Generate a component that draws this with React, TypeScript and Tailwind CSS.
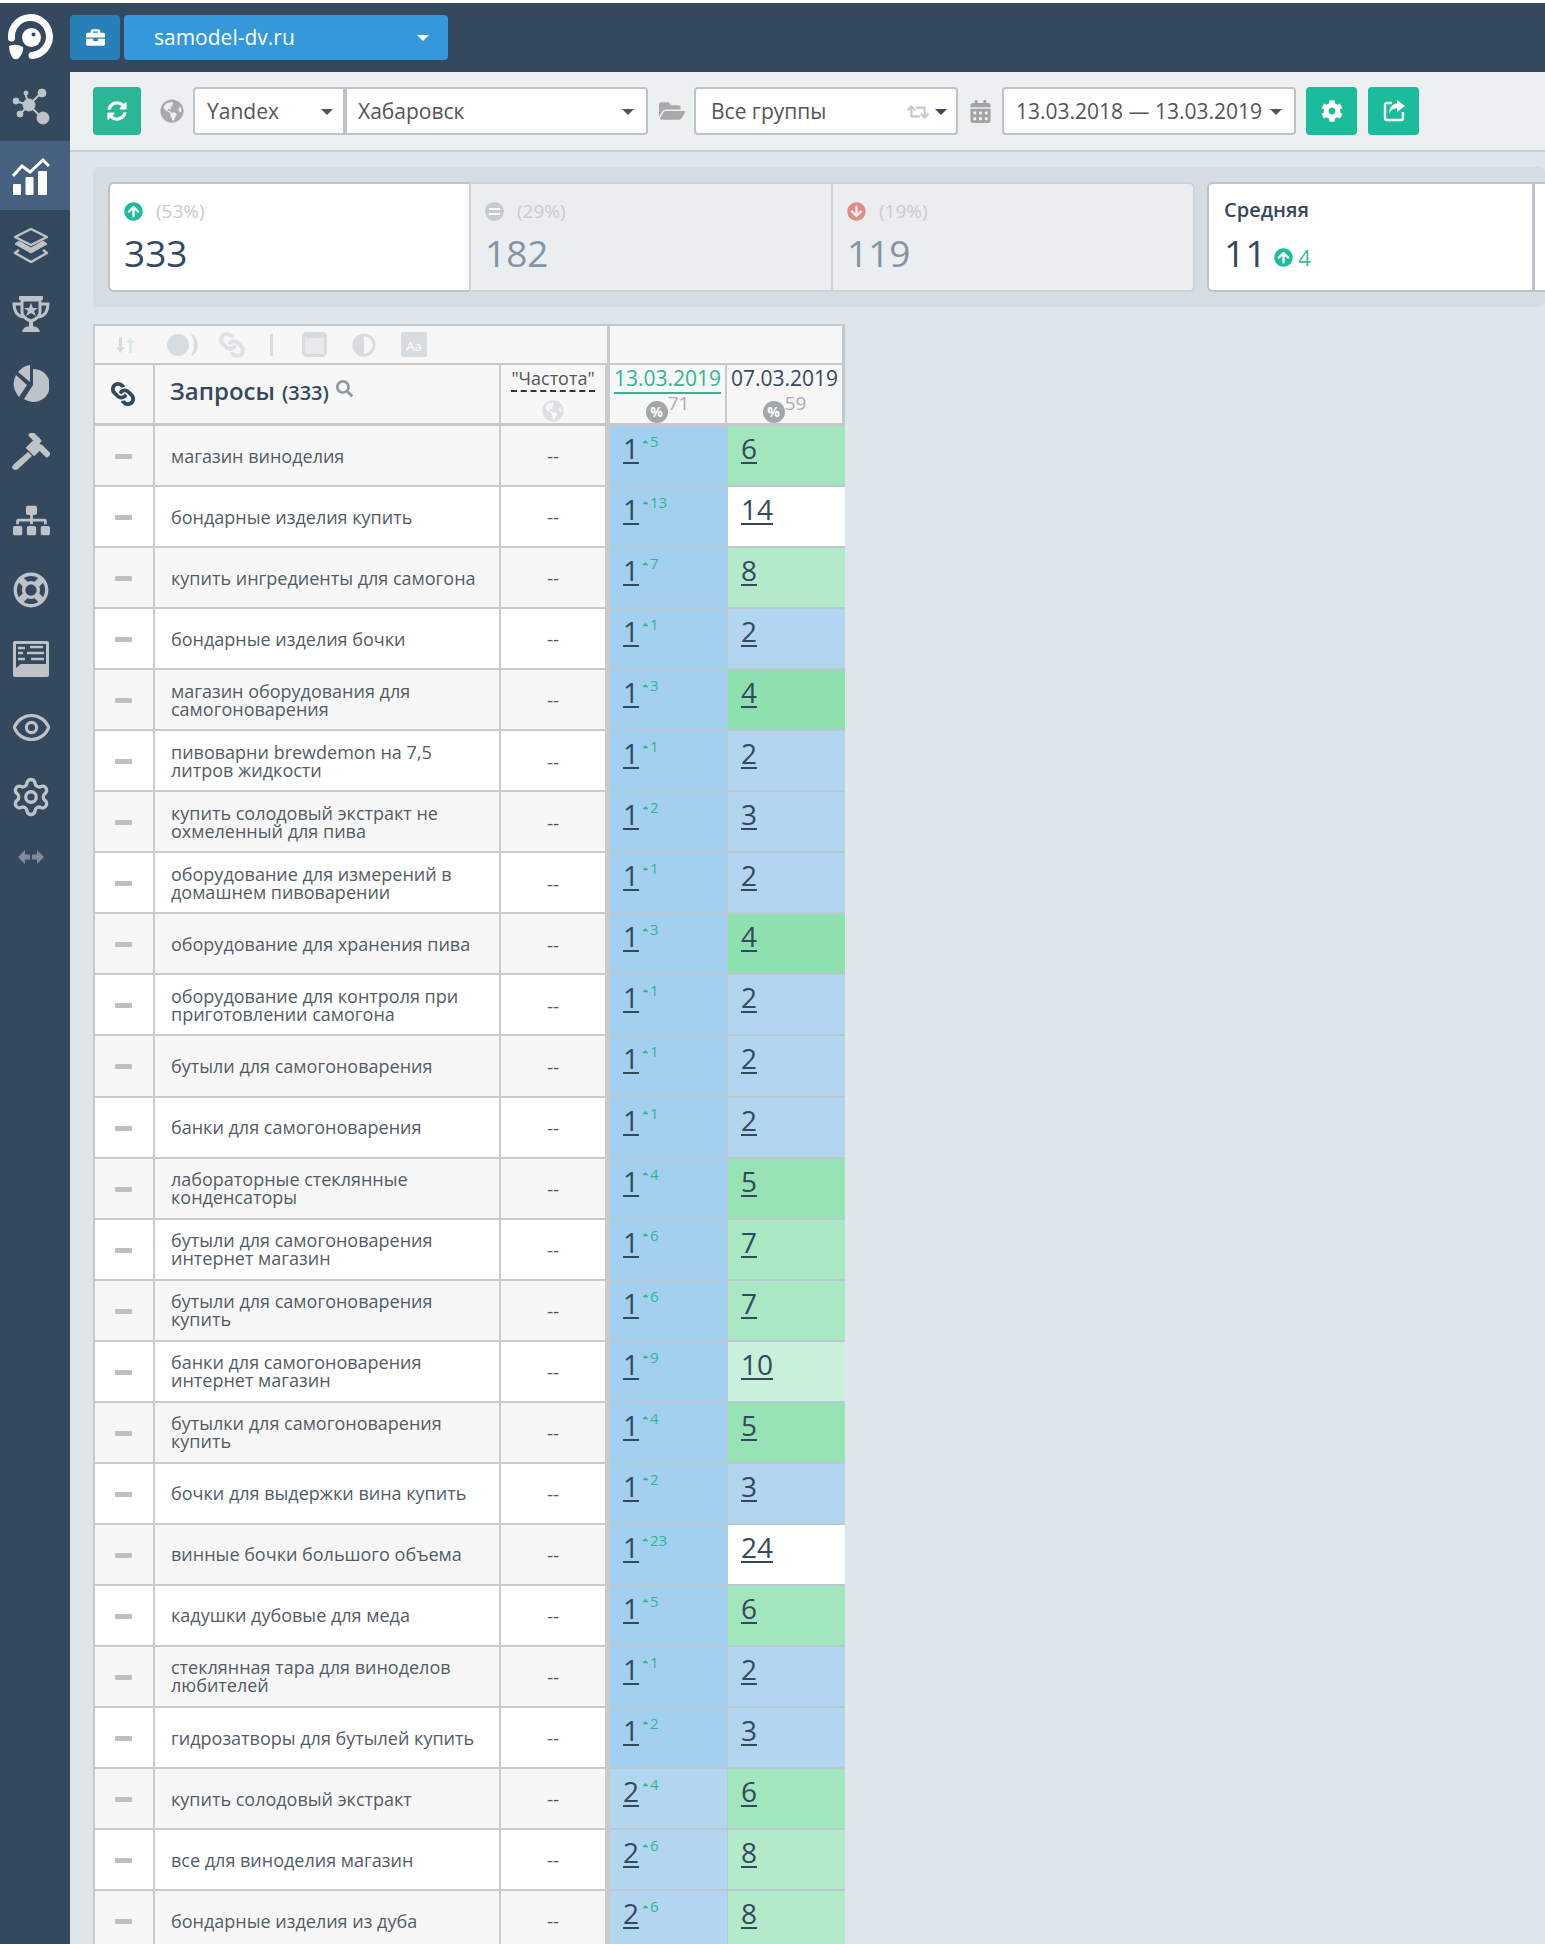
import React from 'react';
import {
  FaBriefcase,
  FaSyncAlt,
  FaGlobeAmericas,
  FaFolderOpen,
  FaRetweet,
  FaCalendarAlt,
  FaCog,
  FaArrowCircleUp,
  FaArrowCircleDown,
  FaLink,
  FaSearch,
  FaSitemap,
  FaRegLifeRing,
  FaCaretUp,
  FaAdjust,
} from 'react-icons/fa';
import { Eye, Settings } from 'lucide-react';

interface QueryRow {
  text: string;
  pos: number;
  delta: number;
  prev: number;
}

const rows: QueryRow[] = [
  { text: 'магазин виноделия', pos: 1, delta: 5, prev: 6 },
  { text: 'бондарные изделия купить', pos: 1, delta: 13, prev: 14 },
  { text: 'купить ингредиенты для самогона', pos: 1, delta: 7, prev: 8 },
  { text: 'бондарные изделия бочки', pos: 1, delta: 1, prev: 2 },
  { text: 'магазин оборудования для\nсамогоноварения', pos: 1, delta: 3, prev: 4 },
  { text: 'пивоварни brewdemon на 7,5\nлитров жидкости', pos: 1, delta: 1, prev: 2 },
  { text: 'купить солодовый экстракт не\nохмеленный для пива', pos: 1, delta: 2, prev: 3 },
  { text: 'оборудование для измерений в\nдомашнем пивоварении', pos: 1, delta: 1, prev: 2 },
  { text: 'оборудование для хранения пива', pos: 1, delta: 3, prev: 4 },
  { text: 'оборудование для контроля при\nприготовлении самогона', pos: 1, delta: 1, prev: 2 },
  { text: 'бутыли для самогоноварения', pos: 1, delta: 1, prev: 2 },
  { text: 'банки для самогоноварения', pos: 1, delta: 1, prev: 2 },
  { text: 'лабораторные стеклянные\nконденсаторы', pos: 1, delta: 4, prev: 5 },
  { text: 'бутыли для самогоноварения\nинтернет магазин', pos: 1, delta: 6, prev: 7 },
  { text: 'бутыли для самогоноварения\nкупить', pos: 1, delta: 6, prev: 7 },
  { text: 'банки для самогоноварения\nинтернет магазин', pos: 1, delta: 9, prev: 10 },
  { text: 'бутылки для самогоноварения\nкупить', pos: 1, delta: 4, prev: 5 },
  { text: 'бочки для выдержки вина купить', pos: 1, delta: 2, prev: 3 },
  { text: 'винные бочки большого объема', pos: 1, delta: 23, prev: 24 },
  { text: 'кадушки дубовые для меда', pos: 1, delta: 5, prev: 6 },
  { text: 'стеклянная тара для виноделов\nлюбителей', pos: 1, delta: 1, prev: 2 },
  { text: 'гидрозатворы для бутылей купить', pos: 1, delta: 2, prev: 3 },
  { text: 'купить солодовый экстракт', pos: 2, delta: 4, prev: 6 },
  { text: 'все для виноделия магазин', pos: 2, delta: 6, prev: 8 },
  { text: 'бондарные изделия из дуба', pos: 2, delta: 6, prev: 8 },
];

const cellColor = (v: number) => {
  if (v === 1) return 'bg-[#a3d0ee]';
  if (v <= 3) return 'bg-[#b3d6f0]';
  if (v === 4) return 'bg-[#8ee0ae]';
  if (v === 5) return 'bg-[#98e3b6]';
  if (v === 6) return 'bg-[#a1e6bc]';
  if (v === 7) return 'bg-[#aae8c3]';
  if (v === 8) return 'bg-[#b3ebca]';
  if (v <= 10) return 'bg-[#c8f0da]';
  return 'bg-white';
};

const Logo = () => (
  <svg width="48" height="48" viewBox="0 0 48 48" fill="none">
    <path d="M4.5 24 A19 19 0 1 1 25 41.5" stroke="#fff" strokeWidth="7" strokeLinecap="round" />
    <circle cx="24.5" cy="23.5" r="9.5" fill="#fff" />
    <circle cx="26.5" cy="20.5" r="2" fill="#34495e" />
    <path d="M2 32 Q9 29 16 33 Q17 38 12 44 Q8 47 5 43 Q2 38 2 32 Z" fill="#fff" />
  </svg>
);

const GrowthIcon = () => (
  <svg width="38" height="38" viewBox="0 0 38 38" fill="#fff">
    <rect x="1" y="27" width="8" height="11" rx="1" />
    <rect x="13.5" y="20" width="8" height="18" rx="1" />
    <rect x="26" y="14" width="9" height="24" rx="1" />
    <path d="M1 19 L10 9 L18 15 L31 3 L37 9" fill="none" stroke="#fff" strokeWidth="3" />
  </svg>
);

const LayersIcon = () => (
  <svg width="36" height="36" viewBox="0 0 36 36" fill="none" stroke="#bdc3c7" strokeWidth="2.4" strokeLinejoin="round">
    <path d="M18 2 L34 10 L18 18 L2 10 Z" />
    <path d="M6 14 L2 17 L18 26 L34 17 L30 14 L18 21 Z" fill="#bdc3c7" strokeWidth="1" />
    <path d="M6 23 L2 26 L18 35 L34 26 L30 23" />
  </svg>
);

const TrophyIcon = () => (
  <svg width="38" height="38" viewBox="0 0 38 38" fill="#bdc3c7">
    <rect x="7" y="1" width="24" height="4" rx="1" />
    <path d="M10 5 H28 V17 Q28 23 19 26 Q10 23 10 17 Z" fill="none" stroke="#bdc3c7" strokeWidth="3" />
    <path d="M9 9 H2 Q2 20 11 22 M29 9 H36 Q36 20 27 22" fill="none" stroke="#bdc3c7" strokeWidth="3" />
    <path d="M19 8 L21 13 H26 L22 16 L24 21 L19 18 L14 21 L16 16 L12 13 H17 Z" />
    <rect x="17" y="25" width="4" height="7" />
    <path d="M10 37 Q11 31 19 31 Q27 31 28 37 Z" />
  </svg>
);

const PieIcon = () => (
  <svg width="36" height="38" viewBox="0 0 36 38" fill="#bdc3c7">
    <path d="M20 5 A16.5 16.5 0 1 1 11 35 L20 21 Z" />
    <path d="M17 1 V18 L5 8 Q10 2 17 1 Z" />
    <path d="M3 11 L14 21 L6 33 Q-3 22 3 11 Z" />
  </svg>
);

const GavelIcon = () => (
  <svg width="38" height="38" viewBox="0 0 38 38" fill="#bdc3c7">
    <rect x="16" y="2" width="14" height="6" rx="1.5" transform="rotate(45 23 5)" />
    <rect x="25" y="15" width="14" height="6" rx="1.5" transform="rotate(45 32 18)" />
    <rect x="16.5" y="8" width="12" height="13" transform="rotate(45 22.5 14.5)" />
    <path d="M16 19 L20 23 L6 36 Q3 38 1 36 Q-1 34 2 31 Z" />
  </svg>
);

const ReportIcon = () => (
  <svg width="36" height="36" viewBox="0 0 36 36">
    <rect x="0" y="0" width="36" height="36" rx="2" fill="#bdc3c7" />
    <rect x="3" y="3" width="30" height="20" fill="#34495e" />
    <path d="M5 7 H12 M17 6 H30 M5 12 H10 M14 12 H31 M5 18 H12 M18 18 H31" stroke="#bdc3c7" strokeWidth="2.4" />
    <path d="M3 27 L9 22 H3 Z" fill="#34495e" />
  </svg>
);

const NetworkIcon = () => (
  <svg width="38" height="38" viewBox="0 0 38 38" fill="#bdc3c7" stroke="#bdc3c7">
    <path d="M17 17 L30 4 M17 17 L30 30 M17 17 L3 13 M17 17 L7 27 M17 17 L13 5" strokeWidth="2" />
    <circle cx="17" cy="17" r="6" />
    <circle cx="30" cy="5" r="4" />
    <circle cx="31" cy="30" r="6" />
    <circle cx="4" cy="13" r="3" />
    <circle cx="8" cy="26" r="3" />
    <circle cx="14" cy="5" r="2" />
  </svg>
);

const SideItem = ({ active, children, className }: { active?: boolean; children: React.ReactNode; className?: string }) => (
  <div className={`flex h-[69px] items-center justify-center pr-[8px] ${active ? 'bg-[#46607f]' : ''} ${className ?? ''}`}>
    {children}
  </div>
);

const Sidebar = () => (
  <aside className="flex w-[70px] shrink-0 flex-col bg-[#34495e] text-[#bdc3c7]">
    <SideItem className="pt-[1px]">
      <Logo />
    </SideItem>
    <SideItem>
      <NetworkIcon />
    </SideItem>
    <SideItem active>
      <GrowthIcon />
    </SideItem>
    <SideItem>
      <LayersIcon />
    </SideItem>
    <SideItem>
      <TrophyIcon />
    </SideItem>
    <SideItem>
      <PieIcon />
    </SideItem>
    <SideItem>
      <GavelIcon />
    </SideItem>
    <SideItem>
      <FaSitemap size={37} />
    </SideItem>
    <SideItem>
      <FaRegLifeRing size={36} />
    </SideItem>
    <SideItem>
      <ReportIcon />
    </SideItem>
    <SideItem>
      <Eye size={41} strokeWidth={1.8} />
    </SideItem>
    <SideItem>
      <Settings size={42} strokeWidth={1.9} />
    </SideItem>
    <div className="flex h-[52px] items-center justify-center pr-[8px]">
      <svg width="26" height="14" viewBox="0 0 26 14" fill="#7f8c9a">
        <path d="M0 7 L7 0 V4.5 H12 V9.5 H7 V14 Z" />
        <path d="M26 7 L19 0 V4.5 H14 V9.5 H19 V14 Z" />
      </svg>
    </div>
  </aside>
);

const Select = ({ children, className }: { children: React.ReactNode; className?: string }) => (
  <div className={`flex h-[48px] items-center rounded-[4px] border-2 border-[#bdc3c7] bg-white pt-[2px] text-[21px] text-[#555] ${className ?? ''}`}>
    {children}
  </div>
);

const Caret = ({ className }: { className?: string }) => (
  <span className={`h-0 w-0 border-x-[6px] border-t-[6px] border-x-transparent border-t-[#555] ${className ?? ''}`} />
);

const GreenButton = ({ children, className }: { children: React.ReactNode; className?: string }) => (
  <div className={`flex h-[48px] items-center justify-center rounded-[4px] bg-[#1abc9c] text-white ${className ?? ''}`}>
    {children}
  </div>
);

const Toolbar = () => (
  <div className="flex h-[80px] shrink-0 items-center border-b-2 border-[#c8ced2] bg-[#ecf0f1] pl-[23px]">
    <GreenButton className="w-[48px] bg-[#2ab795]">
      <FaSyncAlt size={20} />
    </GreenButton>
    <FaGlobeAmericas size={24} className="ml-[19px] text-[#a7a9ab]" />
    <Select className="ml-[9px] w-[152px] justify-between rounded-r-none pl-[12px] pr-[10px]">
      Yandex
      <Caret />
    </Select>
    <Select className="w-[303px] justify-between rounded-l-none pl-[11px] pr-[12px]">
      Хабаровск
      <Caret />
    </Select>
    <FaFolderOpen size={26} className="ml-[11px] text-[#a9a9a9]" />
    <Select className="ml-[9px] w-[264px] pl-[15px] pr-[9px] text-[#444f5a]">
      Все группы
      <FaRetweet size={22} className="ml-auto text-[#c3c9cd]" />
      <span className="ml-[6px] h-0 w-0 border-x-[6px] border-t-[6px] border-x-transparent border-t-[#34495e]" />
    </Select>
    <FaCalendarAlt size={23} className="ml-[11px] text-[#a3a3a3]" />
    <Select className="ml-[10px] w-[294px] justify-between pl-[12px] pr-[12px]">
      13.03.2018 — 13.03.2019
      <Caret />
    </Select>
    <GreenButton className="ml-[10px] w-[51px]">
      <FaCog size={22} />
    </GreenButton>
    <GreenButton className="ml-[11px] w-[51px]">
      <svg width="24" height="24" viewBox="0 0 24 24">
        <path d="M10 4 H5 a2 2 0 0 0 -2 2 v13 a2 2 0 0 0 2 2 h14 a2 2 0 0 0 2 -2 v-6" stroke="#fff" strokeWidth="2.4" fill="none" />
        <path d="M15 1 L23 7 L15 13 V9.5 C11 9.5 8.5 11 7 15 C7 9 10 5 15 4.5 Z" fill="#fff" />
      </svg>
    </GreenButton>
  </div>
);

const StatCard = ({ icon, label, value, active, className }: { icon: React.ReactNode; label: string; value: string; active?: boolean; className?: string }) => (
  <div className={`h-[110px] shrink-0 border-2 pl-[14px] pt-[15px] ${active ? 'border-[#bdc3c7] bg-white text-[#34495e]' : 'border-[#cdd3d6] bg-[#ebeef1] text-[#8494a3]'} ${className ?? ''}`}>
    <div className="flex h-[24px] items-center gap-[13px] text-[19px] leading-[24px] text-[#c8ccce]">
      {icon}
      <span>{label}</span>
    </div>
    <div className="mt-[7px] text-[37px] font-medium leading-[46px]">{value}</div>
  </div>
);

const EqualsCircle = () => (
  <span className="flex h-[19px] w-[19px] items-center justify-center rounded-full bg-[#c5cbd0]">
    <span className="h-[7px] w-[11px] border-y-2 border-white" />
  </span>
);

const Summary = () => (
  <div className="flex h-[140px] w-[1452px] shrink-0 items-center rounded-[6px] bg-[#d5dde3] pl-[15px]">
    <StatCard active className="w-[363px] rounded-l-[6px]" icon={<FaArrowCircleUp size={19} className="text-[#1abc9c]" />} label="(53%)" value="333" />
    <StatCard className="-ml-[2px] w-[364px]" icon={<EqualsCircle />} label="(29%)" value="182" />
    <StatCard className="-ml-[2px] w-[364px] rounded-r-[6px]" icon={<FaArrowCircleDown size={19} className="text-[#e08e85]" />} label="(19%)" value="119" />
    <div className="ml-[12px] h-[110px] w-[328px] shrink-0 rounded-l-[6px] border-2 border-r-[3px] border-[#bdc3c7] bg-white pl-[15px] pt-[13px] text-[#34495e]">
      <div className="text-[20px] font-semibold leading-[26px]">Средняя</div>
      <div className="mt-[7px] flex items-center text-[37px] leading-[46px]">
        11
        <FaArrowCircleUp size={19} className="ml-[8px] mt-[8px] text-[#1abc9c]" />
        <span className="ml-[5px] mt-[7px] text-[22px] leading-[24px] text-[#3fb89c]">4</span>
      </div>
    </div>
    <div className="h-[110px] w-[20px] shrink-0 border-y-2 border-[#bdc3c7] bg-white" />
  </div>
);

const TableTools = () => (
  <div className="flex h-[39px] items-center border-b-2 border-[#c5c9cc] pl-[21px]">
    <svg width="20" height="20" viewBox="0 0 20 20">
      <path d="M3 2h3v10h3l-4.5 6L0 12h3z" fill="#d8dcdf" />
      <path d="M13 18h3V8h3l-4.5-6L10 8h3z" fill="#e2e8ec" />
    </svg>
    <svg width="32" height="24" viewBox="0 0 32 24" className="ml-[31px]">
      <circle cx="11" cy="12" r="11" fill="#d8dcdf" />
      <path d="M24 1 C33 5 33 19 24 23 C28 16 28 8 24 1 Z" fill="#d8dcdf" />
    </svg>
    <FaLink size={26} className="ml-[20px] rotate-90 text-[#dfe2e4]" />
    <span className="ml-[25px] h-[22px] w-[3px] bg-[#d8dcdf]" />
    <svg width="25" height="25" viewBox="0 0 25 25" className="ml-[29px]">
      <rect x="1.5" y="1.5" width="22" height="22" rx="3" fill="none" stroke="#d8dcdf" strokeWidth="3" />
      <rect x="1.5" y="1.5" width="22" height="5" fill="#d8dcdf" />
      <rect x="3" y="7" width="19" height="15" fill="#e8eaec" />
    </svg>
    <FaAdjust size={24} className="ml-[25px] text-[#d8dcdf]" />
    <span className="ml-[25px] flex h-[25px] w-[26px] items-center justify-center rounded-[2px] bg-[#d8dcdf] pt-[4px] text-[13px] leading-none text-white">
      Aa
    </span>
  </div>
);

const PercentBadge = ({ value }: { value: number }) => (
  <div className="flex justify-center">
    <span className="mt-[10px] flex h-[22px] w-[22px] items-center justify-center rounded-full bg-[#a2a7aa] text-[14px] font-bold leading-none text-white">
      %
    </span>
    <span className="mt-[2px] text-[19px] leading-[20px] text-[#a9adb0]">{value}</span>
  </div>
);

const TableRow = ({ row, odd }: { row: QueryRow; odd: boolean }) => {
  const bg = odd ? 'bg-[#f7f7f7]' : 'bg-white';
  return (
    <div className="flex h-[61.05px]">
      <div className={`flex w-[60px] shrink-0 items-center justify-center border-b-2 border-r-2 border-[#c9cccf] pr-[2px] pt-[2px] ${bg}`}>
        <span className="h-[5px] w-[17px] rounded-[1px] bg-[#bdbfc1]" />
      </div>
      <div className={`flex w-[346px] shrink-0 items-center whitespace-pre-line border-b-2 border-r-2 border-[#c9cccf] pl-[16px] text-[18px] leading-[18px] text-[#525c66] ${bg}`}>
        {row.text}
      </div>
      <div className={`flex w-[106px] shrink-0 items-center justify-center border-b-2 border-r-2 border-[#c9cccf] pt-[2px] text-[19px] text-[#555] ${bg}`}>
        --
      </div>
      <div className="w-[3px] shrink-0 bg-[#c5ccd1]" />
      <div className={`w-[117px] shrink-0 border-b-2 border-[#b9c9d4] pl-[13px] pt-[6px] ${cellColor(row.pos)}`}>
        <div className="flex items-start">
          <span className="text-[28px] leading-[32px] text-[#34495e] underline decoration-2 underline-offset-[3px]">{row.pos}</span>
          <span className="ml-[2px] flex items-center text-[15px] leading-[18px] text-[#2fb795]">
            <FaCaretUp size={9} />
            {row.delta}
          </span>
        </div>
      </div>
      <div className={`w-[118px] shrink-0 border-b-2 border-l border-[#b9c9d4] pl-[13px] pt-[6px] ${cellColor(row.prev)}`}>
        <span className="text-[28px] leading-[32px] text-[#34495e] underline decoration-2 underline-offset-[3px]">{row.prev}</span>
      </div>
    </div>
  );
};

const QueryTable = () => (
  <div className="ml-[23px] mt-[17px] w-[752px] border-l-2 border-t-2 border-[#c5c9cc]">
    <div className="flex">
      <div className="w-[512px] shrink-0 bg-[#f7f7f7]">
        <TableTools />
        <div className="flex h-[61px] border-b-[3px] border-[#c5c9cc]">
          <div className="flex w-[60px] shrink-0 items-center justify-center border-r-2 border-[#c9cccf] pr-[2px] text-[#34495e]">
            <FaLink size={24} className="rotate-90" />
          </div>
          <div className="flex w-[346px] shrink-0 items-start border-r-2 border-[#c9cccf] pl-[15px] pt-[10px] text-[#34495e]">
            <span className="text-[24px] font-semibold leading-[32px]">Запросы</span>
            <span className="ml-[7px] mt-[2px] text-[20px] font-semibold leading-[32px]">(333)</span>
            <FaSearch size={17} className="ml-[7px] mt-[5px] text-[#8f9a9e]" />
          </div>
          <div className="flex w-[106px] shrink-0 flex-col items-center border-r-2 border-[#c9cccf] pt-[1px]">
            <span className="border-b-2 border-dashed border-[#333] text-[18px] leading-[24px] text-[#555]">"Частота"</span>
            <FaGlobeAmericas size={22} className="mt-[8px] text-[#dde0e2]" />
          </div>
        </div>
      </div>
      <div className="w-[3px] shrink-0 bg-[#c5ccd1]" />
      <div className="w-[235px] shrink-0">
        <div className="h-[39px] border-b-2 border-r-[3px] border-[#c5c9cc] bg-[#f7f7f7]" />
        <div className="flex h-[61px] border-b-[3px] border-r-[3px] border-[#c5c9cc] bg-[#f7f7f7] text-[21px] leading-[26px]">
          <div className="w-[117px] border-r-2 border-[#c9cccf] text-center">
            <span className="border-b-2 border-[#2fb795] text-[#2fb795]">13.03.2019</span>
            <PercentBadge value={71} />
          </div>
          <div className="w-[115px] text-center text-[#34495e]">
            <span>07.03.2019</span>
            <PercentBadge value={59} />
          </div>
        </div>
      </div>
    </div>
    {rows.map((row, i) => (
      <TableRow key={row.text} row={row} odd={i % 2 === 0} />
    ))}
  </div>
);

export default function App() {
  return (
    <div className="h-[1944px] w-[1545px] overflow-hidden bg-white pt-[3px] font-['Open_Sans',sans-serif]">
      <div className="flex h-[1941px] w-[1545px]">
        <Sidebar />
        <main className="flex min-w-0 flex-1 flex-col bg-[#dee5eb]">
          <div className="flex h-[69px] shrink-0 items-center gap-[4px] bg-[#34495e]">
            <div className="flex h-[45px] w-[50px] items-center justify-center rounded-[4px] bg-[#2980b9] text-white">
              <FaBriefcase size={19} />
            </div>
            <div className="flex h-[45px] w-[324px] items-center justify-between rounded-[4px] bg-[#3498db] pl-[30px] pr-[19px] text-[21px] text-white">
              samodel-dv.ru
              <span className="h-0 w-0 border-x-[6px] border-t-[6px] border-x-transparent border-t-white" />
            </div>
          </div>
          <Toolbar />
          <div className="ml-[23px] mt-[15px]">
            <Summary />
          </div>
          <QueryTable />
        </main>
      </div>
    </div>
  );
}
